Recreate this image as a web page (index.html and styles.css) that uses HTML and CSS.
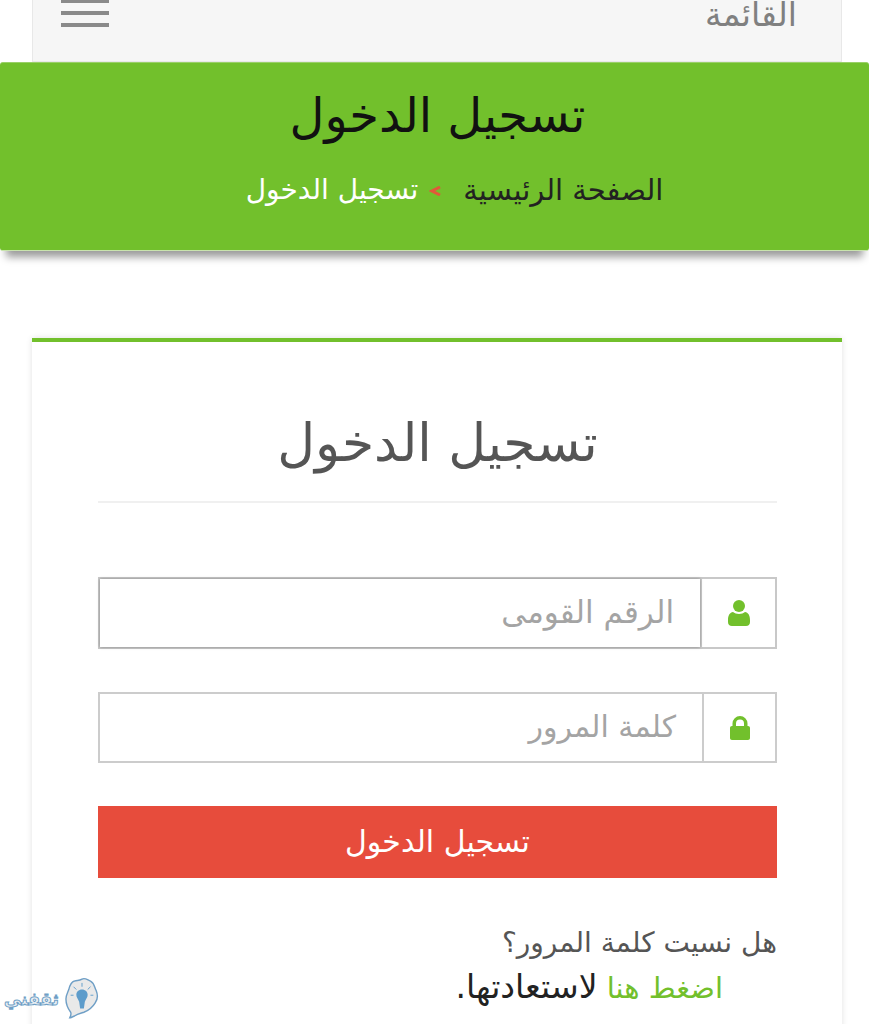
FILE: index.html
```html
<!DOCTYPE html>
<html lang="ar" dir="rtl">
<head>
    <meta charset="UTF-8">
    <title>تسجيل الدخول</title>
    <link rel="stylesheet" href="styles.css">
</head>
<body>
    <header class="menu-bar">
        <span class="menu-title">القائمة</span>
        <span class="burger"><i></i><i></i><i></i></span>
    </header>

    <section class="banner">
        <h1>تسجيل الدخول</h1>
        <p class="crumbs">
            <span class="crumb-home">الصفحة الرئيسية</span>
            <svg class="crumb-sep" width="12" height="10" viewBox="0 0 12 10"><path d="M11 1 3 5l8 4"/></svg>
            <span>تسجيل الدخول</span>
        </p>
    </section>

    <main class="card">
        <h2>تسجيل الدخول</h2>
        <form class="login">
            <div class="field field-active">
                <span class="field-icon">
                    <svg width="22" height="26" viewBox="0 0 22 26"><circle cx="11" cy="6" r="6"/><path d="M0 20c0-5 2-7.500 5-8 1.500 1.300 3.500 2 6 2s4.500-.7 6-2c3 .5 5 3 5 8v2c0 2.500-1.500 4-4 4H4c-2.500 0-4-1.500-4-4z"/></svg>
                </span>
                <span class="field-input">الرقم القومى</span>
            </div>
            <div class="field field-short">
                <span class="field-icon">
                    <svg width="20" height="24" viewBox="0 0 20 24"><path d="M0 12c0-1.200.8-2 2-2h.5V7.500a7.500 7.500 0 0 1 15 0V10h.5c1.200 0 2 .8 2 2v10c0 1.200-.8 2-2 2H2c-1.200 0-2-.8-2-2zM6 10h8V7.500a4 4 0 0 0-8 0z"/></svg>
                </span>
                <span class="field-input">كلمة المرور</span>
            </div>
            <div class="submit">تسجيل الدخول</div>
        </form>
        <p class="help">هل نسيت كلمة المرور؟</p>
        <p class="help help-link"><a href="#">اضغط هنا</a> <span class="help-end">لاستعادتها.</span></p>
    </main>

    <div class="watermark">
        <svg width="34" height="44" viewBox="0 0 36 46">
            <path d="M18 2c3-2 6 1 9 2 4 2 4 6 6 10 2 5 2 9-1 13-3 5-7 8-12 10-3 1-7 2-10 4-2 1-4 2-5 2 1-2 2-4 1-6C3 33 1 28 1 23c0-4 2-7 3-10 1-4 2-8 6-9 3-1 5 0 8-2z" fill="#e9e9e9" stroke="#6f9fc6" stroke-width="1.500"/>
            <path d="M18 13c3.500 0 6 2.500 6 5.500 0 3-2 4.500-3 7.500l-1 7h-4l-1-7c-1-3-3-4.500-3-7.500 0-3 2.500-5.500 6-5.500z" fill="#5d9ccb"/>
            <path d="M18 6v4M9 10l3 3M27 10l-3 3M6 19h3M27 19h3" stroke="#5d9ccb" stroke-width="1" fill="none"/>
        </svg>
        <span>ثقفني</span>
    </div>
</body>
</html>
```
FILE: styles.css
```css
* {
    box-sizing: border-box;
}

html, body {
    height: 1024px;
    overflow: hidden;
}

body {
    margin: 0;
    background: #fff;
    color: #555;
    font-family: "DejaVu Sans", "Noto Sans", sans-serif;
    position: relative;
}

.menu-bar {
    height: 62px;
    margin: 0 27px 0 32px;
    padding: 0 44px 26px 28px;
    background: #f6f6f6;
    border: 1px solid #e8e8e8;
    border-top: 0;
    display: flex;
    justify-content: space-between;
    align-items: flex-end;
}

.menu-title {
    font-size: 33px;
    line-height: 40px;
    color: #808080;
}

.burger {
    display: flex;
    flex-direction: column;
    gap: 8px;
    width: 48px;
    margin-bottom: 8px;
}

.burger i {
    height: 4px;
    background: #8a8a8a;
}

.banner {
    height: 189px;
    background: #72c02c;
    border-top: 1px solid #9ad068;
    border-bottom: 1px solid #c9e4ae;
    border-radius: 3px;
    box-shadow: 0 12px 8px -6px rgba(0, 0, 0, 0.4);
    text-align: center;
    padding: 22px 0 0 6px;
}

.banner h1 {
    margin: 0;
    font-size: 48px;
    line-height: 60px;
    font-weight: 400;
    color: #111;
}

.crumbs {
    margin: 26px 0 0;
    padding-left: 34px;
    font-size: 28px;
    line-height: 38px;
    color: #fff;
    display: flex;
    justify-content: center;
    align-items: center;
}

.crumb-home {
    color: #222;
    font-size: 29px;
}

.crumb-sep {
    margin: 2px 22px 0 11px;
}

.crumb-sep path {
    fill: none;
    stroke: #e2583a;
    stroke-width: 3;
}

.card {
    margin: 87px 27px 0 32px;
    padding: 0 65px 0 66px;
    height: 700px;
    border-top: 4px solid #72c02c;
    box-shadow: 0 0 6px rgba(0, 0, 0, 0.12);
}

.card h2 {
    margin: 0;
    padding: 68px 0 25px;
    border-bottom: 2px solid #f0f0f0;
    text-align: center;
    font-size: 52px;
    line-height: 66px;
    font-weight: 400;
    color: #555;
}

.login {
    padding-top: 74px;
}

.field {
    height: 72px;
    display: flex;
    border: 2px solid #ccc;
    margin-bottom: 43px;
}

.field-short {
    height: 71px;
}

.field-icon {
    width: 75px;
    flex: none;
    display: flex;
    align-items: center;
    justify-content: center;
    border-left: 2px solid #ccc;
}

.field-short .field-icon {
    width: 73px;
}

.field-icon svg {
    fill: #72c02c;
}

.field-active {
    border-color: #c8c8c8;
}

.field-active .field-input {
    box-shadow: 0 0 3px rgba(0, 0, 0, 0.35);
}

.field-input {
    flex: 1;
    padding: 0 26px;
    font-size: 31px;
    line-height: 66px;
    color: #a4a4a4;
}

.field-short .field-input {
    font-size: 30px;
}

.submit {
    height: 72px;
    background: #e74c3c;
    color: #fff;
    font-size: 30px;
    line-height: 72px;
    text-align: center;
}

.help {
    margin: 43px 0 0;
    font-size: 28px;
    line-height: 44px;
    color: #555;
}

.help-link {
    margin-top: 0;
    padding-right: 54px;
    font-size: 29px;
}

.help a {
    color: #72c02c;
    text-decoration: none;
}

.help-end {
    color: #222;
    font-size: 33px;
}

.watermark {
    position: absolute;
    left: 4px;
    bottom: 3px;
    display: flex;
    align-items: center;
    gap: 6px;
    color: #e9eef3;
    -webkit-text-stroke: 1px #6f9fc6;
    font-size: 17px;
    font-weight: 700;
}
```
